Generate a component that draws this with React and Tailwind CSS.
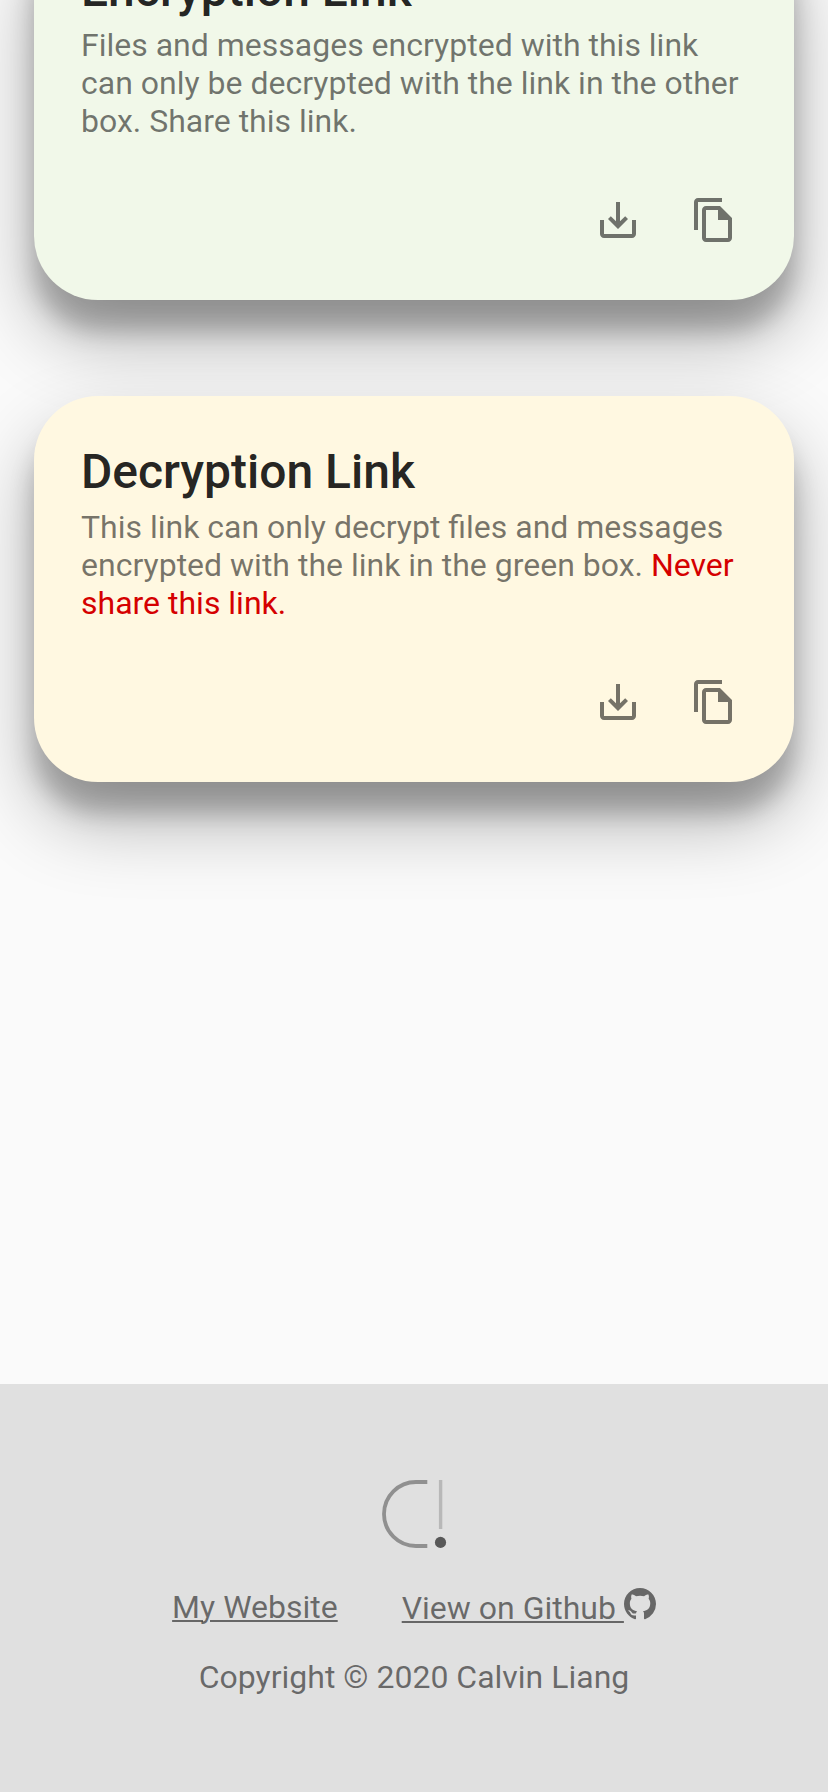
import React from "react";

function SaveIcon() {
  return (
    <svg viewBox="0 0 24 24" className="size-12 fill-current">
      <path d="M19 12v7H5v-7H3v7c0 1.1.9 2 2 2h14c1.1 0 2-.9 2-2v-7h-2zm-6 .67l2.59-2.58L17 11.5l-5 5-5-5 1.41-1.41L11 12.67V3h2v9.67z" />
    </svg>
  );
}

function CopyIcon() {
  return (
    <svg viewBox="0 0 24 24" className="size-12 fill-current">
      <path
        fillRule="evenodd"
        d="M16 1H4c-1.100 0-2 .9-2 2v14h2V3h12V1zM15 5l6 6v10c0 1.100-.9 2-2 2H7.990C6.890 23 6 22.100 6 21V7c0-1.100.9-2 2-2h7zM8 7v14h11v-9h-5V7H8z"
      />
    </svg>
  );
}

function LinkCard({ title, className, children }) {
  return (
    <section
      className={
        "flex h-[386px] shrink-0 flex-col rounded-[64px] p-8 shadow-[0_38px_76px_rgba(0,0,0,0.30),0_30px_24px_rgba(0,0,0,0.22)] " +
        className
      }
    >
      <div className="px-[15px] pt-[10px]">
        <h2 className="text-[48px] leading-[68px] font-medium text-black/87">{title}</h2>
        <p className="mt-0.5 text-[32px] leading-[38px] whitespace-nowrap text-black/54">{children}</p>
      </div>
      <div className="mt-auto flex justify-end text-black/54">
        <button aria-label="Download" className="p-6">
          <SaveIcon />
        </button>
        <button aria-label="Copy" className="p-6">
          <CopyIcon />
        </button>
      </div>
    </section>
  );
}

function Logo() {
  return (
    <svg viewBox="0 0 66 70" className="h-[70px] w-[66px]" fill="none">
      <path d="M46.300 3H35a32 32 0 0 0 0 64h11.300" stroke="#909090" strokeWidth="3.800" />
      <path d="M59.600 1v49" stroke="#b8b8b8" strokeWidth="3.400" />
      <circle cx="59.500" cy="63.400" r="5.600" fill="#585858" />
    </svg>
  );
}

function GithubIcon() {
  return (
    <svg viewBox="0 0 16 16" className="mb-[7px] size-8 fill-current">
      <path d="M8 0C3.580 0 0 3.580 0 8c0 3.540 2.290 6.530 5.470 7.590.4.070.55-.17.55-.38 0-.19-.01-.82-.01-1.490-2.010.37-2.530-.49-2.690-.94-.09-.23-.48-.94-.82-1.130-.28-.15-.68-.52-.01-.53.63-.01 1.080.58 1.230.82.72 1.210 1.870.87 2.330.66.070-.52.28-.87.51-1.070-1.780-.2-3.640-.89-3.640-3.950 0-.87.31-1.590.82-2.150-.08-.2-.36-1.020.08-2.120 0 0 .67-.21 2.200.82.64-.18 1.320-.27 2-.27s1.360.09 2 .27c1.530-1.040 2.200-.82 2.200-.82.44 1.100.16 1.920.08 2.120.51.56.82 1.270.82 2.150 0 3.070-1.870 3.750-3.650 3.950.29.25.54.73.54 1.480 0 1.070-.01 1.930-.01 2.200 0 .21.15.46.55.38A8.010 8.010 0 0 0 16 8c0-4.420-3.580-8-8-8z" />
    </svg>
  );
}

export default function App() {
  return (
    <div className="flex h-[1792px] w-[828px] flex-col overflow-hidden bg-[#fafafa] font-['Roboto',sans-serif]">
      <main className="-mt-[86px] flex h-[1470px] shrink-0 flex-col gap-24 px-[34px]">
        <LinkCard title="Encryption Link" className="bg-[#f1f8e9]">
          Files and messages encrypted with this link
          <br />
          can only be decrypted with the link in the other
          <br />
          box. Share this link.
        </LinkCard>
        <LinkCard title="Decryption Link" className="bg-[#fff8e1]">
          This link can only decrypt files and messages
          <br />
          encrypted with the link in the green box. <span className="text-[#d50000]">Never
          <br />
          share this link.</span>
        </LinkCard>
      </main>
      <footer className="flex grow flex-col items-center bg-[#e0e0e0] pt-[95px] text-[32px] leading-[38px] text-black/54">
        <Logo />
        <div className="mt-[38px] flex h-[41px] items-start gap-16 whitespace-nowrap">
          <a className="mt-px underline decoration-2 underline-offset-2">My Website</a>
          <a className="flex h-[40px] items-end">
            <span className="whitespace-pre underline decoration-2 underline-offset-2">View on Github </span>
            <GithubIcon />
          </a>
        </div>
        <p className="mt-[30px]">Copyright © 2020 Calvin Liang</p>
      </footer>
    </div>
  );
}
